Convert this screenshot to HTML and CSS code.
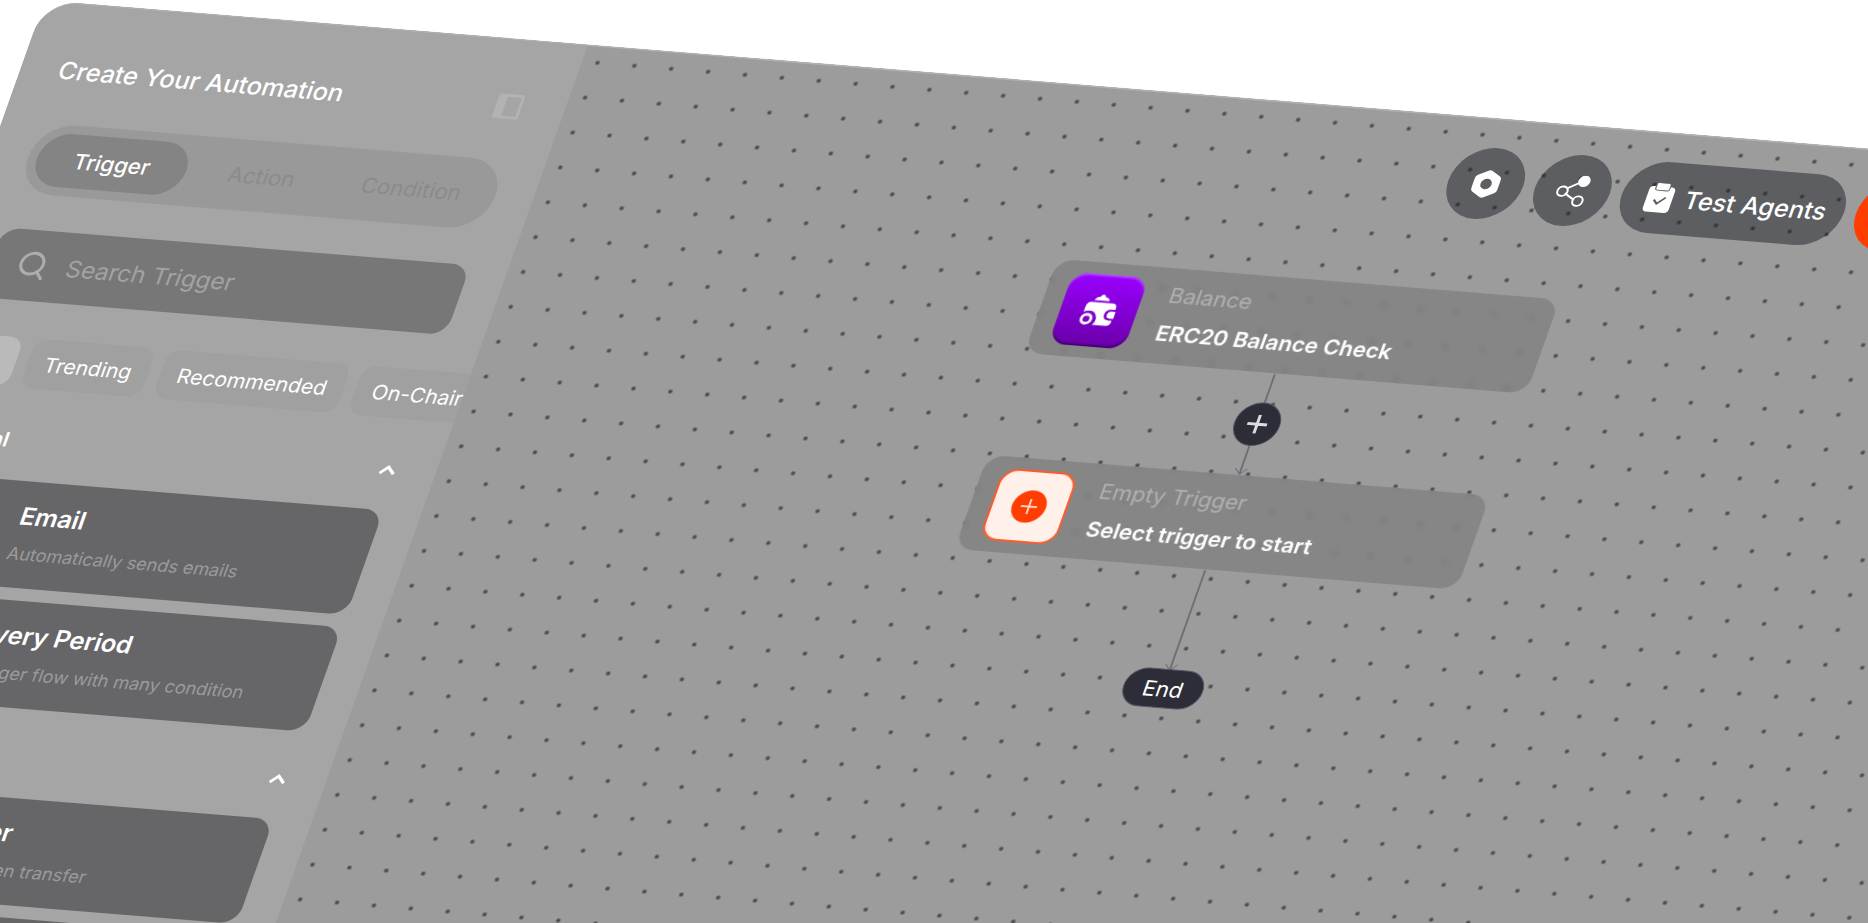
FILE: index.html
```html
<!DOCTYPE html>
<html lang="en">
<head>
  <meta charset="UTF-8">
  <meta name="viewport" content="width=device-width, initial-scale=1.0">
  <title>Create Your Automation</title>
  <link rel="stylesheet" href="styles.css">
</head>
<body>
  <div class="board">
    <!-- Sidebar -->
    <aside class="sidebar">
      <header class="sidebar-header">
        <h1>Create Your Automation</h1>
        <button class="icon-button" aria-label="Collapse sidebar">
          <svg width="28" height="28" viewBox="0 0 28 28" fill="none">
            <path d="M3 1h22a2 2 0 0 1 2 2v22a2 2 0 0 1-2 2H3a2 2 0 0 1-2-2V3a2 2 0 0 1 2-2zm7 3v20h14V4z" fill="#b2b2b2" fill-rule="evenodd"/>
          </svg>
        </button>
      </header>

      <nav class="tabs">
        <button class="tab active">Trigger</button>
        <button class="tab">Action</button>
        <button class="tab">Condition</button>
      </nav>

      <label class="search">
        <svg width="28" height="30" viewBox="0 0 28 30" fill="none" stroke="#adadad" stroke-width="3" stroke-linecap="round">
          <circle cx="13" cy="13" r="11"/>
          <path d="M20 21l6 7"/>
        </svg>
        <input type="text" placeholder="Search Trigger" aria-label="Search Trigger">
      </label>

      <div class="chips">
        <button class="chip active">All</button>
        <button class="chip">Trending</button>
        <button class="chip">Recommended</button>
        <button class="chip">On-Chain</button>
      </div>

      <section class="group">
        <div class="group-header">
          <h2>General</h2>
          <button class="icon-button" aria-label="Toggle General">
            <svg width="20" height="12" viewBox="0 0 20 12" fill="none" stroke="#fff" stroke-width="3"><path d="M3 10l7-7 7 7"/></svg>
          </button>
        </div>
        <button class="card">
          <span class="card-icon"></span>
          <span class="card-text">
            <span class="card-title">Email</span>
            <span class="card-desc">Automatically sends emails</span>
          </span>
        </button>
        <button class="card">
          <span class="card-icon"></span>
          <span class="card-text">
            <span class="card-title">Every Period</span>
            <span class="card-desc">Trigger flow with many condition</span>
          </span>
        </button>
      </section>

      <section class="group">
        <div class="group-header">
          <h2>On-Chain</h2>
          <button class="icon-button" aria-label="Toggle On-Chain">
            <svg width="20" height="12" viewBox="0 0 20 12" fill="none" stroke="#fff" stroke-width="3"><path d="M3 10l7-7 7 7"/></svg>
          </button>
        </div>
        <button class="card">
          <span class="card-icon"></span>
          <span class="card-text">
            <span class="card-title">Transfer</span>
            <span class="card-desc">Monitor token transfer</span>
          </span>
        </button>
        <button class="card">
          <span class="card-icon"></span>
          <span class="card-text">
            <span class="card-title">Swap</span>
            <span class="card-desc">Token swap</span>
          </span>
        </button>
      </section>
    </aside>

    <!-- Canvas -->
    <main class="canvas">
      <div class="toolbar">
        <button class="tool round" aria-label="Settings">
          <svg width="32" height="32" viewBox="0 0 32 32">
            <path d="M14 2q2-1 4 0l9 5q2 1 2 4v10q0 3-2 4l-9 5q-2 1-4 0l-9-5q-2-1-2-4V11q0-3 2-4zM16 10.500a5.500 5.500 0 1 0 0 11 5.500 5.500 0 0 0 0-11z" fill="#fff" fill-rule="evenodd"/>
          </svg>
        </button>
        <button class="tool round" aria-label="Share">
          <svg width="34" height="34" viewBox="0 0 34 34" fill="none" stroke="#fff" stroke-width="2">
            <path d="M10 15l11-7M10 20l11 6"/>
            <circle cx="7" cy="18" r="5"/>
            <circle cx="25" cy="27" r="5"/>
            <circle cx="25" cy="6" r="5" fill="#fff"/>
          </svg>
        </button>
        <button class="tool">
          <svg width="28" height="32" viewBox="0 0 28 32">
            <rect x="1" y="4" width="26" height="27" rx="4" fill="#fff"/>
            <rect x="7" y="0" width="14" height="8" rx="2" fill="#fff" stroke="#5c5d61" stroke-width="1"/>
            <path d="M9 18l4 4 7-7" fill="none" stroke="#5c5d61" stroke-width="2"/>
          </svg>
          Test Agents
        </button>
        <button class="tool deploy">Deploy</button>
      </div>

      <svg class="edges" width="100%" height="100%" fill="none" stroke="#6f6f7a" stroke-width="2">
        <path d="M784 281v106"/>
        <path d="M784 489v106"/>
        <path d="M778 381l6 6 6-6M778 589l6 6 6-6" stroke-width="1"/>
      </svg>

      <button class="node node-balance">
        <span class="node-icon purple">
          <svg width="38" height="36" viewBox="0 0 40 38" fill="#fff">
            <path d="M12 8q1-4 5-4 1-3 3-3t3 3q4 0 5 4z"/>
            <path d="M10 10h22q5 0 5 5v2h-3q-7 0-7 6t7 6h3v1q0 5-5 5H18q4-5 1-10-3-6-10-5-3 0-4 2v-6q0-6 5-6z"/>
            <path d="M34 19h4v8h-4q-4 0-4-4t4-4z"/>
            <circle cx="10" cy="29" r="5" fill="none" stroke="#fff" stroke-width="3"/>
          </svg>
        </span>
        <span class="node-text">
          <span class="node-label">Balance</span>
          <span class="node-title">ERC20 Balance Check</span>
        </span>
      </button>

      <button class="add-step" aria-label="Add step">
        <svg width="20" height="20" viewBox="0 0 20 20" stroke="#dcdce0" stroke-width="3"><path d="M10 0v20M0 10h20"/></svg>
      </button>

      <button class="node node-empty">
        <span class="node-icon empty">
          <svg width="36" height="36" viewBox="0 0 36 36">
            <circle cx="18" cy="18" r="17" fill="#ff3d00"/>
            <path d="M18 10v16M10 18h16" stroke="#ffd5c8" stroke-width="2"/>
          </svg>
        </span>
        <span class="node-text">
          <span class="node-label">Empty Trigger</span>
          <span class="node-title">Select trigger to start</span>
        </span>
      </button>

      <div class="end">End</div>
    </main>
  </div>
</body>
</html>
```
FILE: styles.css
```css
* {
  box-sizing: border-box;
}

body {
  margin: 0;
  height: 100vh;
  overflow: hidden;
  background-color: #fff;
  color: #fff;
  font-family: Inter, "Liberation Sans", sans-serif;
}

button {
  border: none;
  background: none;
  color: inherit;
  font-family: inherit;
  padding: 0;
  cursor: pointer;
}

svg {
  display: block;
  flex-shrink: 0;
}

/* The whole board is tilted */
.board {
  display: flex;
  width: 120vw;
  height: 120vh;
  margin-left: 45px;
  border-top: 2px solid #b0b0b0;
  border-radius: 34px;
  overflow: hidden;
  background-color: #9c9c9c;
  transform: matrix(0.9967, 0.081, -0.3348, 0.9422, 0, 0);
  transform-origin: 0 0;
}

/* Sidebar */
.sidebar {
  width: 545px;
  flex-shrink: 0;
  padding: 51px 38px 0;
  overflow: hidden;
  background-color: #a5a5a5;
}

.sidebar-header {
  display: flex;
  align-items: center;
  justify-content: space-between;
  height: 36px;
  padding-right: 4px;
}

.sidebar-header h1 {
  margin: 0;
  font-size: 25px;
  font-weight: 500;
}

.tabs {
  display: flex;
  height: 74px;
  margin-top: 38px;
  padding: 9px;
  border-radius: 37px;
  background-color: #999;
}

.tab {
  flex: 1;
  border-radius: 28px;
  color: #8b8b8b;
  font-size: 22px;
}

.tab.active {
  background-color: #848484;
  color: #fff;
  font-weight: 500;
}

.search {
  display: flex;
  align-items: center;
  gap: 20px;
  height: 74px;
  margin-top: 37px;
  padding: 0 28px;
  border-radius: 18px;
  background-color: #777;
}

.search input {
  flex: 1;
  min-width: 0;
  padding: 0;
  border: none;
  outline: none;
  background: none;
  color: #fff;
  font-family: inherit;
  font-size: 24px;
}

.search input::placeholder {
  color: #a3a3a3;
}

.chips {
  display: flex;
  gap: 12px;
  margin: 38px 0;
}

.chip {
  flex-shrink: 0;
  height: 52px;
  padding: 0 17px;
  border-radius: 14px;
  background-color: #a0a0a0;
  font-size: 21px;
}

.chip.active {
  background-color: #bababa;
}

.group {
  display: flex;
  flex-direction: column;
  gap: 13px;
  margin-bottom: 35px;
}

.group-header {
  display: flex;
  align-items: center;
  justify-content: space-between;
  height: 32px;
  margin-bottom: 13px;
}

.group-header h2 {
  margin: 0;
  font-size: 21px;
  font-weight: 600;
}

.card {
  display: flex;
  align-items: center;
  gap: 31px;
  height: 111px;
  padding: 0 18px;
  border-radius: 18px;
  background-color: #666668;
  text-align: left;
}

.card-icon {
  width: 68px;
  height: 68px;
  border-radius: 14px;
  background-color: #77777a;
}

.card-text {
  display: flex;
  flex-direction: column;
  gap: 14px;
  padding-bottom: 4px;
}

.card-title {
  font-size: 25px;
  font-weight: 600;
}

.card-desc {
  color: #9a9a9c;
  font-size: 18px;
}

/* Canvas */
.canvas {
  position: relative;
  flex: 1;
  background-image: radial-gradient(circle, #4d4d4d 1px, transparent 3px);
  background-size: 37px 37px;
  background-position: -3px -2px;
}

.toolbar {
  position: absolute;
  top: 29px;
  left: 886px;
  display: flex;
  gap: 12px;
}

.tool {
  display: flex;
  align-items: center;
  justify-content: center;
  gap: 11px;
  height: 75px;
  padding: 0 18px 0 24px;
  border-radius: 38px;
  background-color: rgba(30, 32, 40, 0.5);
  font-size: 25px;
  font-weight: 500;
  white-space: nowrap;
}

.tool.round {
  width: 75px;
  padding: 0;
}

.tool.deploy {
  padding: 0 40px;
  background-color: #ff3d00;
}

.edges {
  position: absolute;
  top: 0;
  left: 0;
}

.node {
  position: absolute;
  left: 532px;
  display: flex;
  align-items: center;
  gap: 26px;
  width: 504px;
  height: 100px;
  padding: 0 20px;
  border-radius: 18px;
  background-color: rgba(120, 120, 120, 0.6);
  backdrop-filter: blur(3px);
  text-align: left;
}

.node-balance {
  top: 180px;
}

.node-empty {
  top: 388px;
}

.node-icon {
  display: flex;
  align-items: center;
  justify-content: center;
  width: 76px;
  height: 76px;
  border-radius: 17px;
}

.node-icon.purple {
  background: linear-gradient(#9a00ff, #6a00a8);
  box-shadow: inset 0 2px 2px #b44dff, inset 0 -2px 2px #42006b;
}

.node-icon.empty {
  border: 2px solid #ff5a26;
  background-color: #fff0ea;
}

.node-text {
  display: flex;
  flex-direction: column;
  gap: 14px;
  padding-bottom: 4px;
}

.node-label {
  color: #b0b0b0;
  font-size: 22px;
}

.node-title {
  font-size: 22px;
  font-weight: 600;
}

.add-step {
  position: absolute;
  top: 311px;
  left: 761px;
  display: flex;
  align-items: center;
  justify-content: center;
  width: 46px;
  height: 46px;
  border: 1px solid #55556a;
  border-radius: 50%;
  background-color: #2d2d38;
}

.end {
  position: absolute;
  top: 594px;
  left: 744px;
  display: flex;
  align-items: center;
  justify-content: center;
  width: 80px;
  height: 41px;
  border: 1px solid #55556a;
  border-radius: 21px;
  background-color: #2d2d38;
  font-size: 22px;
}
```
